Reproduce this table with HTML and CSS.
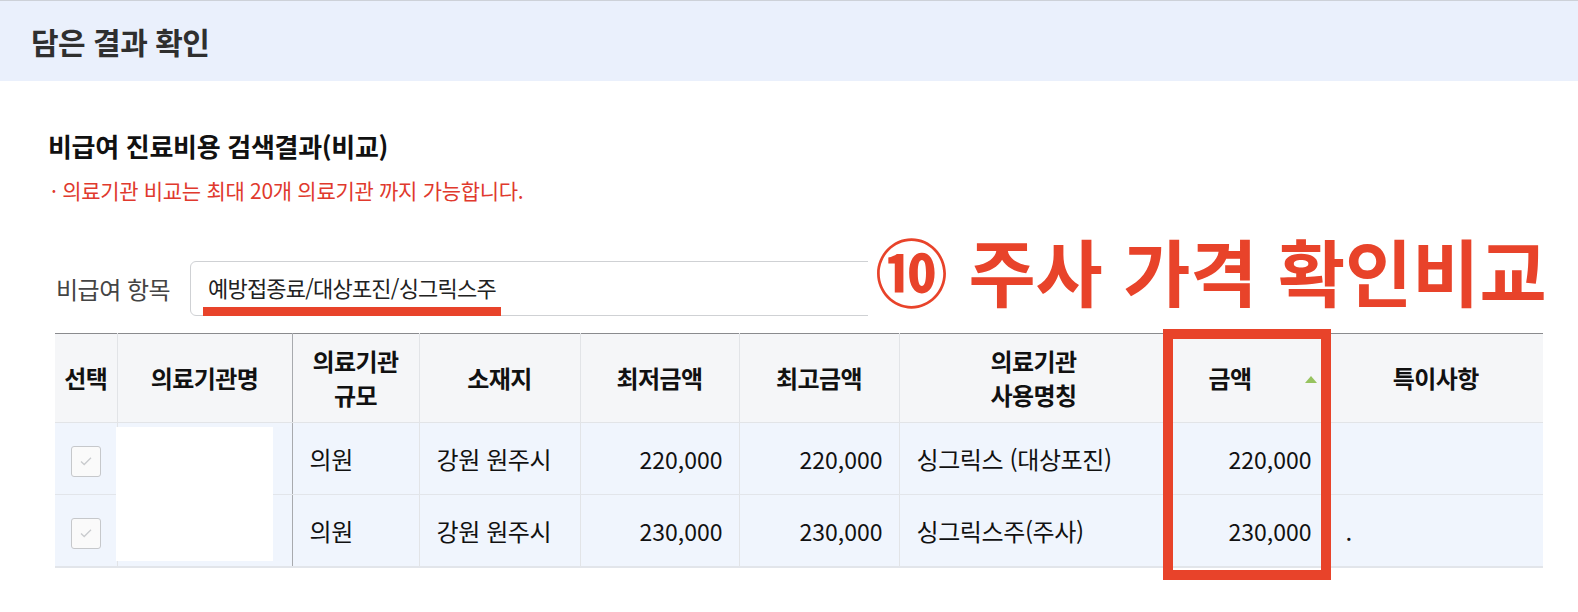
FILE: index.html
```html
<!DOCTYPE html>
<html lang="ko">
<head>
  <meta charset="UTF-8" />
  <title>담은 결과 확인</title>
  <meta name="viewport" content="width=device-width, initial-scale=1" />
  <link rel="stylesheet" href="styles.css">
</head>
<body>
  <header class="page-head">
    <h1>담은 결과 확인</h1>
  </header>

  <main class="result">
    <h2 class="result-title">비급여 진료비용 검색결과(비교)</h2>
    <p class="result-note">· 의료기관 비교는 최대 20개 의료기관 까지 가능합니다.</p>

    <div class="filter">
      <span class="filter-label">비급여 항목</span>
      <div class="filter-input">
        <span class="filter-value">예방접종료/대상포진/싱그릭스주</span>
      </div>
    </div>

    <div class="callout">⑩ 주사 가격 확인비교</div>

    <div class="table-wrap">
      <table class="compare">
        <colgroup>
          <col style="width:62px">
          <col style="width:175px">
          <col style="width:127px">
          <col style="width:161px">
          <col style="width:159px">
          <col style="width:160px">
          <col style="width:269px">
          <col style="width:160px">
          <col style="width:215px">
        </colgroup>
        <thead>
          <tr>
            <th>선택</th>
            <th class="split">의료기관명</th>
            <th>의료기관<br>규모</th>
            <th>소재지</th>
            <th>최저금액</th>
            <th>최고금액</th>
            <th>의료기관<br>사용명칭</th>
            <th class="sortable">금액<span class="sort-up"></span></th>
            <th>특이사항</th>
          </tr>
        </thead>
        <tbody>
          <tr>
            <td class="pick"><span class="check"><svg viewBox="0 0 16 16" width="16" height="16"><path d="M3 8.5l3.2 3L13 4.8" fill="none" stroke="#c9cbce" stroke-width="1.3"/></svg></span></td>
            <td class="split"></td>
            <td>의원</td>
            <td>강원 원주시</td>
            <td class="num">220,000</td>
            <td class="num">220,000</td>
            <td>싱그릭스 (대상포진)</td>
            <td class="num">220,000</td>
            <td></td>
          </tr>
          <tr>
            <td class="pick"><span class="check"><svg viewBox="0 0 16 16" width="16" height="16"><path d="M3 8.5l3.2 3L13 4.8" fill="none" stroke="#c9cbce" stroke-width="1.3"/></svg></span></td>
            <td class="split"></td>
            <td>의원</td>
            <td>강원 원주시</td>
            <td class="num">230,000</td>
            <td class="num">230,000</td>
            <td>싱그릭스주(주사)</td>
            <td class="num">230,000</td>
            <td>.</td>
          </tr>
        </tbody>
      </table>
      <div class="redact"></div>
      <div class="highlight"></div>
    </div>
  </main>
</body>
</html>
```

FILE: styles.css
```css
body {
  margin: 0;
  min-height: 612px;
  font-family: "Noto Sans CJK KR", "Noto Sans", sans-serif;
  color: #111;
  background: #fff;
}
.page-head {
  height: 80px;
  border-top: 1px solid #cdd1d8;
  background: #eaf0fc;
  display: flex;
  align-items: center;
  padding-left: 31px;
}
.page-head h1 {
  margin: 0;
  font-size: 30px;
  font-weight: 700;
  color: #2f2f2f;
  letter-spacing: -0.5px;
}
.result {
  position: relative;
  padding: 47px 35px 43px 48px;
}
.result-title {
  margin: 0;
  font-size: 26px;
  line-height: 36px;
  font-weight: 700;
  letter-spacing: -0.3px;
  color: #111;
}
.result-note {
  margin: 11px 0 0 3px;
  font-size: 21px;
  line-height: 30px;
  color: #e0392d;
  letter-spacing: -0.3px;
}
.filter {
  display: flex;
  align-items: center;
  margin: 56px 0 0 8px;
}
.filter-label {
  width: 134px;
  font-size: 24px;
  color: #444;
  letter-spacing: -0.5px;
}
.filter-input {
  flex: 1;
  height: 55px;
  box-sizing: border-box;
  border: 1px solid #cfd1d4;
  border-radius: 6px;
  display: flex;
  align-items: flex-end;
  padding-left: 12px;
}
.filter-value {
  display: inline-block;
  padding: 0 5px 6px;
  margin-bottom: -1px;
  font-size: 22px;
  line-height: 28px;
  color: #222;
  letter-spacing: -0.8px;
  border-bottom: 9px solid #e8432a;
}
.callout {
  position: absolute;
  left: 868px;
  top: 133px;
  width: 700px;
  height: 110px;
  background: #fff;
  padding-left: 7px;
  box-sizing: border-box;
  font-size: 73px;
  line-height: 110px;
  font-weight: 700;
  color: #e8432a;
  white-space: nowrap;
}
.table-wrap {
  position: relative;
  margin: 17px 0 0 7px;
}
.compare {
  width: 1488px;
  border-collapse: collapse;
  table-layout: fixed;
  border-top: 1px solid #8a8b8e;
  border-bottom: 2px solid #e2e5ea;
}
.compare th {
  height: 88px;
  background: #f5f6f8;
  font-size: 24px;
  line-height: 34px;
  font-weight: 700;
  letter-spacing: -0.6px;
  color: #111;
  border-left: 1px solid #e2e4e7;
  border-bottom: 1px solid #e2e4e7;
  padding: 0;
}
.compare td {
  height: 71px;
  background: #f0f5fd;
  font-size: 24px;
  color: #111;
  letter-spacing: -0.4px;
  border-left: 1px solid #e2e4e7;
  border-bottom: 1px solid #e2e5ea;
  padding: 0 16px 0 17px;
  white-space: nowrap;
}
.compare th:first-child,
.compare td:first-child {
  border-left: none;
}
.compare .split + th,
.compare .split + td {
  border-left: 1px solid #a8aaae;
}
.compare td.num {
  text-align: right;
  padding-right: 16px;
  font-size: 23px;
  letter-spacing: 0;
}
.compare td.pick {
  padding: 0;
  text-align: center;
}
.check {
  display: inline-flex;
  align-items: center;
  justify-content: center;
  width: 30px;
  height: 31px;
  box-sizing: border-box;
  border: 1px solid #c6c8cb;
  border-radius: 3px;
  background: #fafafa;
  vertical-align: middle;
}
.compare th.sortable {
  position: relative;
  padding-right: 36px;
}
.sort-up {
  position: absolute;
  right: 11px;
  top: 42px;
  border-left: 6px solid transparent;
  border-right: 6px solid transparent;
  border-bottom: 7px solid #97c35f;
}
.redact {
  position: absolute;
  left: 61px;
  top: 94px;
  width: 157px;
  height: 134px;
  background: #fff;
}
.highlight {
  position: absolute;
  left: 1108px;
  top: -4px;
  bottom: -12px;
  width: 168px;
  box-sizing: border-box;
  border: 10px solid #e8432a;
}
```
